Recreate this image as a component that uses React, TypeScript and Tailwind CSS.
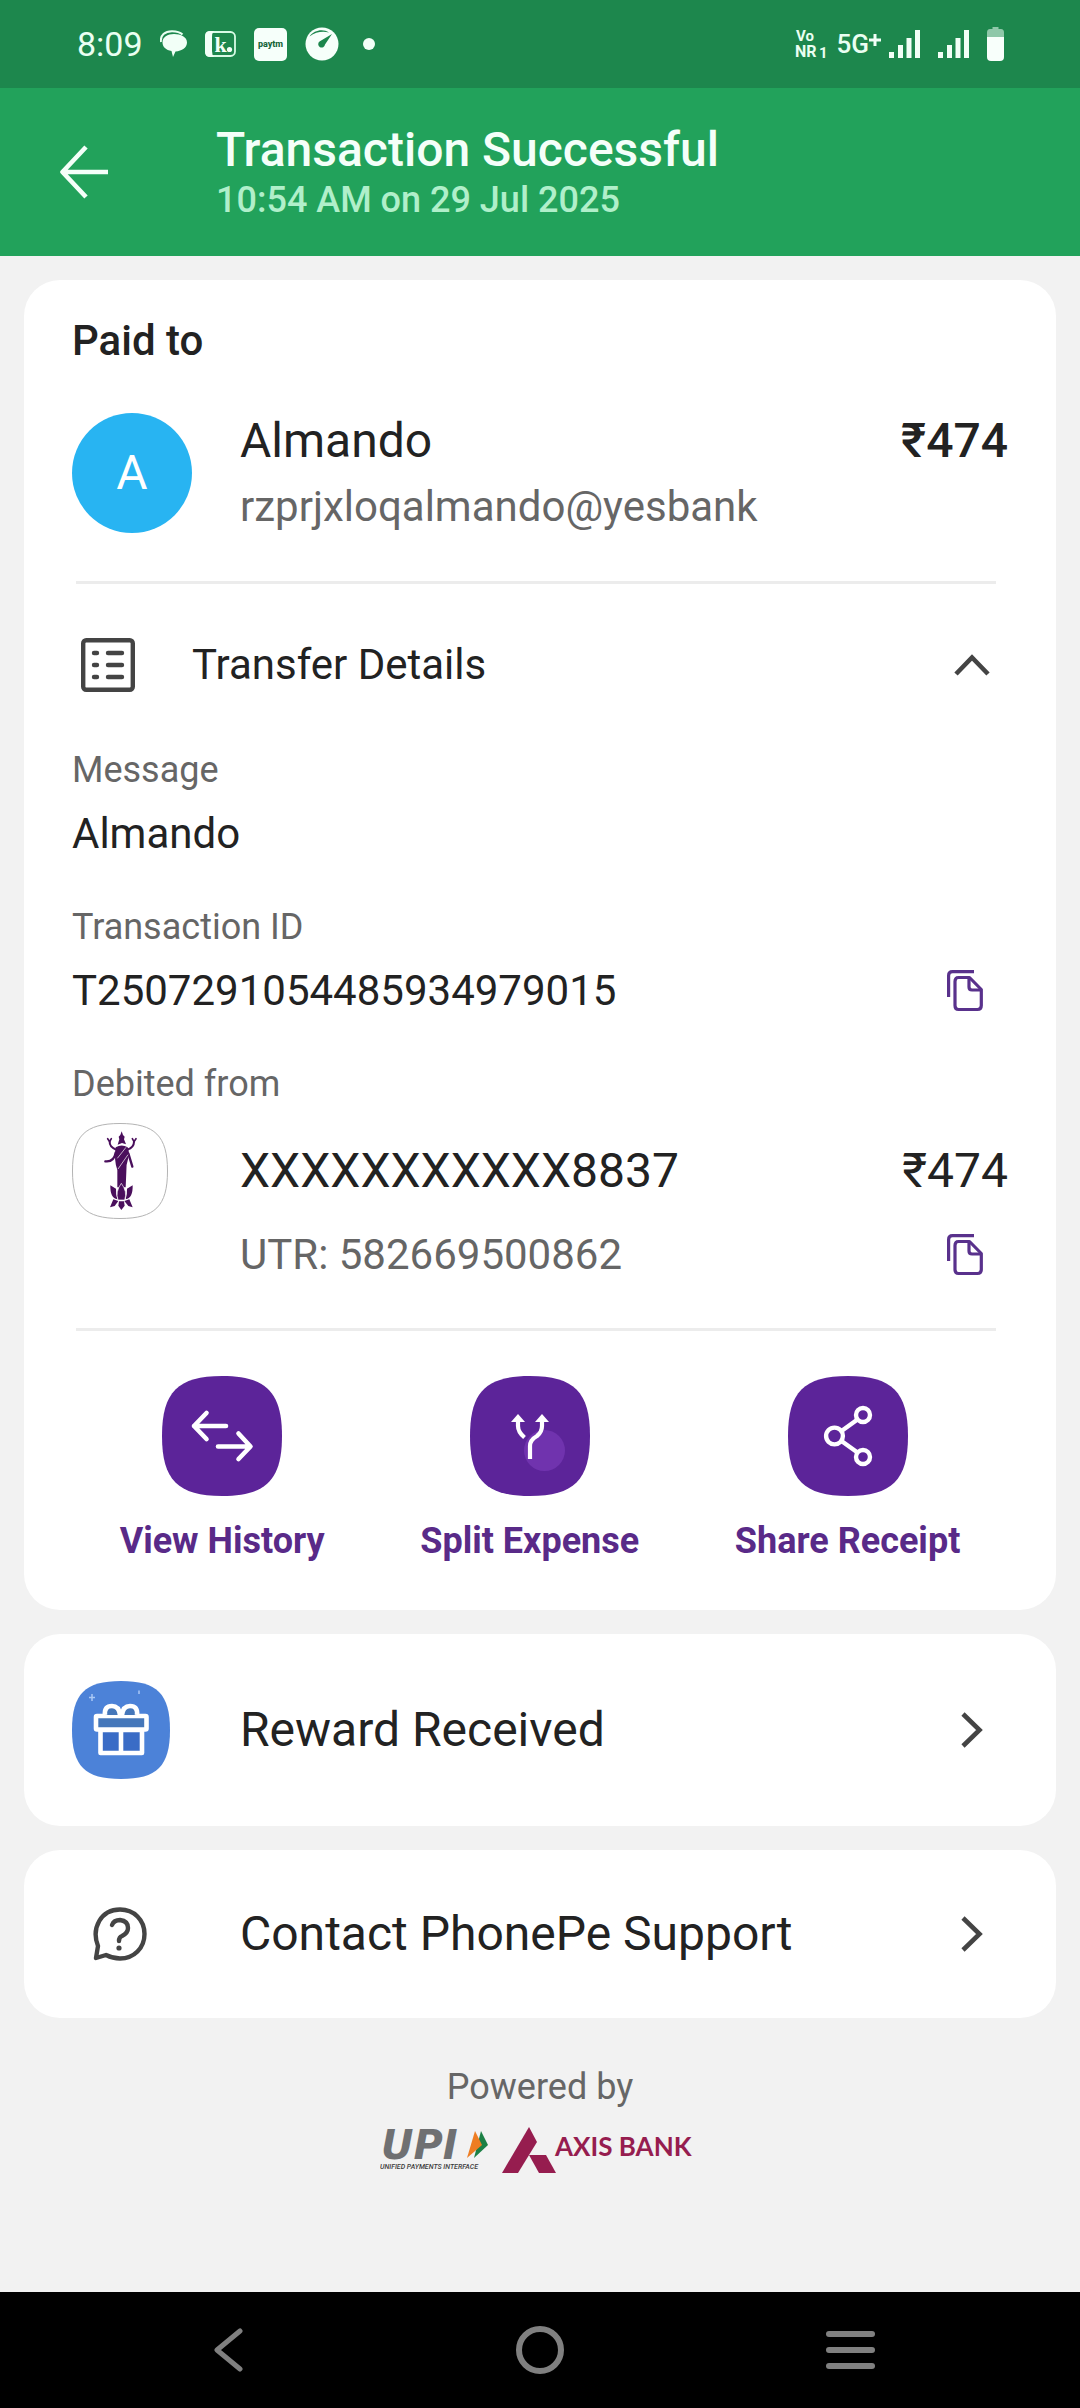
import type { ReactNode } from "react";

const SQUIRCLE = "M60 0C104 0 120 16 120 60S104 120 60 120 0 104 0 60 16 0 60 0Z";

function ChatIcon() {
  return (
    <svg width="27" height="28" viewBox="0 0 27 28" aria-hidden="true">
      <path d="M1 12C0 5 5 1.200 12 1.200C17 1.200 20 2 22.500 4.500" fill="none" stroke="#eafff2" strokeWidth="2" />
      <path d="M14 4C21 4 27 7 27 12.500C27 17.500 22 21 15.500 21.500L13 27L11.500 21C6 20 2.500 17 2.500 12.500C2.500 7 7.500 4 14 4Z" fill="#f2fff7" />
    </svg>
  );
}

function KIcon() {
  return (
    <svg width="31" height="26" viewBox="0 0 31 26" aria-hidden="true">
      <rect x="1" y="1" width="29" height="24" rx="4.500" fill="none" stroke="#d8fbe6" strokeWidth="1.800" />
      <path d="M5 0H9Q7 2 7 6V20Q7 24 9 26H5Q0 26 0 21V5Q0 0 5 0Z" fill="#f2fff7" />
      <text x="9.500" y="21" fontSize="22" fontWeight="700" fontFamily="Liberation Serif, serif" fill="#f2fff7">k</text>
      <circle cx="24.500" cy="18.500" r="2.600" fill="#f2fff7" />
    </svg>
  );
}

function PaytmIcon() {
  return (
    <svg width="33" height="33" viewBox="0 0 33 33" aria-hidden="true">
      <rect width="33" height="33" rx="5" fill="#f6fffa" />
      <text x="16.500" y="19" textAnchor="middle" fontSize="9" fontWeight="800" fontFamily="Roboto, sans-serif" fill="#17653a">paytm</text>
    </svg>
  );
}

function GaugeIcon() {
  return (
    <svg width="34" height="34" viewBox="0 0 34 34" aria-hidden="true">
      <circle cx="17" cy="17" r="16.500" fill="#f6fffa" />
      <path d="M4.500 9.500C9 3 18 1.500 24 5.500C17 4 11 5 4.500 9.500Z" fill="#1c864c" />
      <path d="M27 7L20 17.500A3.400 3.400 0 1 1 14.500 14.500Z" fill="#1c864c" />
    </svg>
  );
}

function SignalIcon() {
  return (
    <svg width="32" height="28" viewBox="0 0 32 28" fill="#f2fff7" aria-hidden="true">
      <rect x="0" y="22" width="5" height="6" />
      <rect x="9" y="15" width="5" height="13" />
      <rect x="17.500" y="8" width="5" height="20" />
      <rect x="26" y="0" width="5" height="28" />
    </svg>
  );
}

function BatteryIcon() {
  return (
    <svg width="17" height="34" viewBox="0 0 17 34" aria-hidden="true">
      <path d="M5.500 0H11.500V2H14Q17 2 17 5.500V10H0V5.500Q0 2 3 2H5.500Z" fill="#8fc8a9" />
      <path d="M0 10H17V30Q17 34 13 34H4Q0 34 0 30Z" fill="#f8fffb" />
    </svg>
  );
}

function StatusBar() {
  return (
    <div className="flex h-[88px] items-center justify-between bg-[#1d874d] pl-[77px] pr-[76px] text-[#eafff2]">
      <div className="flex items-center">
        <span className="w-[83px] text-[34px] leading-[40px]">8:09</span>
        <div className="flex items-center gap-[18px]">
          <ChatIcon />
          <KIcon />
          <PaytmIcon />
          <GaugeIcon />
        </div>
        <span className="ml-6 size-3 rounded-full bg-[#f2fff7]" />
      </div>
      <div className="flex items-center">
        <svg width="36" height="36" viewBox="0 0 36 36" fill="#eafff2" fontFamily="Roboto, sans-serif" fontWeight="700" aria-hidden="true">
          <text x="1" y="15" fontSize="15">Vo</text>
          <text x="0" y="31" fontSize="16">NR</text>
          <text x="24" y="32" fontSize="15">1</text>
        </svg>
        <span className="ml-[6px] text-[26px] font-medium leading-8">5G</span>
        <svg className="mb-2" width="12" height="14" viewBox="0 0 12 14" stroke="#f2fff7" strokeWidth="3" aria-hidden="true">
          <path d="M0 7H12M6 1V13" />
        </svg>
        <div className="ml-2 flex items-center gap-[17px]">
          <SignalIcon />
          <SignalIcon />
          <BatteryIcon />
        </div>
      </div>
    </div>
  );
}

function Header() {
  return (
    <header className="flex h-[168px] items-center bg-[#22a25b] pl-[60px]">
      <button type="button" aria-label="Back" className="w-[156px] shrink-0">
        <svg width="49" height="54" viewBox="0 0 49 54" fill="none" stroke="#f4fff9" strokeWidth="4.600" strokeLinejoin="round">
          <path d="M26 2L2.500 27L26 52M3 27H48" />
        </svg>
      </button>
      <div className="min-w-0">
        <h1 className="text-[48px] font-medium leading-[56px] text-[#f4fff9]">Transaction Successful</h1>
        <p className="text-[36px] font-medium leading-[44px] text-[#b0efca]">10:54 AM on 29 Jul 2025</p>
      </div>
    </header>
  );
}

function Divider() {
  return <hr className="ml-1 mr-3 h-[3px] border-0 bg-[#ececec]" />;
}

function CopyButton({ label }: { label: string }) {
  return (
    <button type="button" aria-label={label} className="mr-[25px] shrink-0">
      <svg width="36" height="42" viewBox="0 0 36 42" fill="none" stroke="#59318c" strokeWidth="3.200">
        <path d="M1.600 27V5.500Q1.600 1.600 5.500 1.600H27" />
        <path d="M11.500 7.500H22.500L34.300 19.500V35.500Q34.300 39.500 30.500 39.500H11.500Q8 39.500 8 35.500V11.500Q8 7.500 11.500 7.500Z" strokeLinejoin="round" />
        <path d="M22 8V17Q22 20 25 20H34" />
      </svg>
    </button>
  );
}

function ListIcon() {
  return (
    <svg width="54" height="54" viewBox="0 0 54 54" fill="none" stroke="#444" strokeWidth="4.400" aria-hidden="true">
      <rect x="2.200" y="2.200" width="49.600" height="49.600" rx="3" />
      <path d="M13 15H16M13 27H16M13 39H16M27 15H41M27 27H41M27 39H41" strokeLinecap="round" />
    </svg>
  );
}

function BankLogo() {
  return (
    <svg width="96" height="96" viewBox="36 39 288 288" fill="#4a0f5c" aria-hidden="true">
      <path
        d="M180 40.500C285 40.500 322.500 78 322.500 183S285 325.500 180 325.500 37.500 288 37.500 183 75 40.500 180 40.500Z"
        fill="#fff"
        stroke="#b4b4b4"
        strokeWidth="3"
      />
      <path d="M185 64L189 75L194 80L192 88L198 103L186 99L173 104L178 88L176 80L181 75Z" />
      <path d="M167 112Q185 101 203 112Q210 128 204 148Q198 164 199 185L197 232H172L172 180Q161 150 167 112Z" />
      <g fill="none" stroke="#4a0f5c" strokeLinecap="round">
        <path d="M168 119Q148 110 149 95" strokeWidth="6" />
        <path d="M202 119Q222 112 222 95" strokeWidth="6" />
        <path d="M143 86L149 95L154 86M217 86L222 95L228 86" strokeWidth="5" />
        <path d="M167 128Q162 157 136 154" strokeWidth="7" />
        <path d="M205 130Q211 150 217 170" strokeWidth="7" />
      </g>
      <path d="M172 145L198 112M174 177L204 134" stroke="#fff" strokeWidth="2" fill="none" />
      <path d="M151 226L168 236Q167 250 172 268Q150 265 151 226ZM218 226L201 236Q202 250 197 268Q219 265 218 226Z" />
      <path d="M184 220Q203 245 194 270H174Q165 245 184 220Z" stroke="#fff" strokeWidth="2" />
      <path d="M160 268L175 273L164 288L150 292ZM208 268L193 273L205 288L218 292ZM177 274H192L194 287L184 300L175 287Z" />
    </svg>
  );
}

function HistoryGlyph() {
  return (
    <g fill="none" stroke="#fff" strokeWidth="4.600" strokeLinejoin="round" strokeLinecap="round">
      <path d="M44.500 37L32 50L44.500 63M32 50H64" />
      <path d="M76.500 57.500L88.500 70.500L76.500 83M88 70.500H56" />
    </g>
  );
}

function SplitGlyph() {
  return (
    <g>
      <circle cx="74.500" cy="74.500" r="20.500" fill="#7033ae" />
      <g fill="none" stroke="#fff" strokeWidth="4.200">
        <path d="M48 44V50Q48 56 54.500 61.500" />
        <path d="M72 44V50Q72 56 67 60Q60 64 60 70V83" />
      </g>
      <path d="M48 38L55 46H41ZM72 38L79 46H65Z" fill="#fff" />
    </g>
  );
}

function ShareGlyph() {
  return (
    <g fill="none" stroke="#fff" strokeWidth="4.400">
      <circle cx="46.500" cy="60" r="8.400" />
      <circle cx="75" cy="39" r="7" />
      <circle cx="75" cy="81" r="7" />
      <path d="M53.500 55L69.500 43.500M53.500 65L69.500 76.500" />
    </g>
  );
}

function Action({ label, children }: { label: string; children: ReactNode }) {
  return (
    <button type="button" className="flex flex-col items-center gap-[23px]">
      <svg width="120" height="120" viewBox="0 0 120 120" aria-hidden="true">
        <path d={SQUIRCLE} fill="#5c2499" />
        {children}
      </svg>
      <span className="text-[36px] font-bold leading-[44px] text-[#592a88]">{label}</span>
    </button>
  );
}

function ChevronRight() {
  return (
    <svg className="mr-[25px] shrink-0" width="22" height="36" viewBox="0 0 22 36" fill="none" stroke="#444" strokeWidth="4.600" aria-hidden="true">
      <path d="M2 2L18.500 18L2 34" />
    </svg>
  );
}

function GiftIcon() {
  return (
    <svg width="98" height="98" viewBox="0 0 98 98" aria-hidden="true">
      <path d="M49 0C85 0 98 13 98 49S85 98 49 98 0 85 0 49 13 0 49 0Z" fill="#4c82d8" />
      <g fill="#3a6cc6" stroke="#fff" strokeWidth="4.600" strokeLinejoin="round">
        <path d="M28.500 49H70V72H28.500ZM49 49V72" />
        <rect x="24" y="35" width="50.500" height="13.500" rx="1" fill="#4577ba" />
        <path d="M33 34Q32 25 40 25Q47 25 48 34M50 34Q51 25 58 25Q66 25 65 34" fill="#4577ba" />
      </g>
      <path d="M20 13V20M17 16.500H23M67 9.500V13" stroke="#a9c8f5" strokeWidth="1.500" />
    </svg>
  );
}

function HelpIcon() {
  return (
    <svg width="54" height="54" viewBox="0 0 54 54" fill="none" stroke="#444" strokeWidth="4.400" strokeLinecap="round" strokeLinejoin="round" aria-hidden="true">
      <path d="M3 51L5 39C-2 21 8 2.500 27 2.500C41 2.500 51.500 13 51.500 27C51.500 41 41 51.500 27 51.500C21 51.500 17 50 13 48Z" />
      <path d="M19 18Q21 13 27 13Q35 14 35 21Q35 26 29 29Q26 30 26 34" />
      <circle cx="26" cy="41" r="2.600" fill="#444" stroke="none" />
    </svg>
  );
}

function LinkCard({ icon, label, className }: { icon: ReactNode; label: string; className: string }) {
  return (
    <button type="button" className={`flex w-full items-center rounded-[36px] bg-white px-12 text-left ${className}`}>
      <span className="w-[168px] shrink-0">{icon}</span>
      <span className="flex-1 text-[48px] leading-[56px]">{label}</span>
      <ChevronRight />
    </button>
  );
}

function UpiLogo() {
  return (
    <svg width="110" height="46" viewBox="0 0 110 46" role="img" aria-label="UPI">
      <text x="1" y="32" fontSize="40" fontWeight="700" fontStyle="italic" fontFamily="DejaVu Sans, sans-serif" fill="#6f7072">UPI</text>
      <path d="M101 4L108 18L94 31Z" fill="#1c8045" />
      <path d="M95 4L102 18L87 31Z" fill="#ee7d23" />
      <text x="0" y="42" fontSize="7" fontStyle="italic" fontWeight="500" fontFamily="Roboto, sans-serif" fill="#3c3c3c">UNIFIED PAYMENTS INTERFACE</text>
    </svg>
  );
}

function AxisLogo() {
  return (
    <svg width="198" height="46" viewBox="0 0 198 46" role="img" aria-label="Axis Bank" fill="#961d4f">
      <path d="M27 0L35 15L16 46H0Z" />
      <path d="M27 28H44L54 46H37Z" />
      <text x="53" y="29" fontSize="26" fontWeight="700" fontFamily="Lato, sans-serif">AXIS BANK</text>
    </svg>
  );
}

function SystemNav() {
  return (
    <nav className="mt-auto grid h-[116px] grid-cols-[1fr_48px_1fr] items-center bg-black px-[205px]" aria-label="System">
      <button type="button" aria-label="Back" className="justify-self-start pl-2">
        <svg width="30" height="44" viewBox="0 0 30 44" fill="none" stroke="#808080" strokeWidth="5" strokeLinecap="round" strokeLinejoin="round">
          <path d="M27 3L4 22L27 41" />
        </svg>
      </button>
      <button type="button" aria-label="Home" className="size-12 rounded-full border-[6px] border-[#808080]" />
      <button type="button" aria-label="Recent apps" className="flex w-[49px] flex-col gap-[10px] justify-self-end">
        <span className="h-[6px] w-full rounded-sm bg-[#808080]" />
        <span className="h-[6px] w-full rounded-sm bg-[#808080]" />
        <span className="h-[6px] w-full rounded-sm bg-[#808080]" />
      </button>
    </nav>
  );
}

export default function App() {
  return (
    <div className="flex min-h-screen flex-col bg-[#f2f2f2] font-[Roboto,sans-serif] text-[#222]">
      <StatusBar />
      <Header />
      <main className="flex flex-col gap-6 px-6 pt-6">
        <section className="rounded-[36px] bg-white pb-[47px] pt-[37px]">
          <div className="px-12">
            <h2 className="text-[42px] font-medium leading-[48px]">Paid to</h2>
            <div className="mb-12 mt-12 flex items-start">
              <div className="w-[168px] shrink-0">
                <div className="flex size-[120px] items-center justify-center rounded-full bg-[#28b4f2] text-[48px] leading-[56px] text-white">A</div>
              </div>
              <div className="min-w-0 flex-1">
                <p className="text-[48px] leading-[56px]">Almando</p>
                <p className="mt-3 text-[42px] leading-[52px] text-[#666]">rzprjxloqalmando@yesbank</p>
              </div>
              <p className="text-[48px] font-medium leading-[56px]">₹474</p>
            </div>
            <Divider />
            <button type="button" aria-expanded="true" className="mt-[54px] flex w-full items-center pl-[9px] text-left">
              <span className="w-[111px] shrink-0">
                <ListIcon />
              </span>
              <span className="flex-1 text-[42px] leading-[52px]">Transfer Details</span>
              <svg className="mr-[18px]" width="36" height="22" viewBox="0 0 36 22" fill="none" stroke="#444" strokeWidth="4.600" aria-hidden="true">
                <path d="M2 20L18 3.500L34 20" />
              </svg>
            </button>
            <dl className="mt-14 flex flex-col gap-[45px]">
              <div>
                <dt className="text-[36px] leading-[44px] text-[#666]">Message</dt>
                <dd className="mt-4 text-[42px] leading-[52px]">Almando</dd>
              </div>
              <div>
                <dt className="text-[36px] leading-[44px] text-[#666]">Transaction ID</dt>
                <dd className="mt-4 flex items-center justify-between text-[42px] leading-[52px]">
                  T2507291054485934979015
                  <CopyButton label="Copy transaction ID" />
                </dd>
              </div>
              <div>
                <dt className="text-[36px] leading-[44px] text-[#666]">Debited from</dt>
                <dd className="mt-[17px] flex items-center">
                  <span className="w-[168px] shrink-0">
                    <BankLogo />
                  </span>
                  <span className="flex-1 text-[48px] leading-[56px]">XXXXXXXXXXX8837</span>
                  <span className="text-[48px] leading-[56px]">₹474</span>
                </dd>
                <dd className="mt-[10px] flex items-center justify-between pl-[168px] text-[42px] leading-[52px] text-[#666]">
                  UTR: 582669500862
                  <CopyButton label="Copy UTR" />
                </dd>
              </div>
            </dl>
            <div className="mt-[47px]">
              <Divider />
            </div>
          </div>
          <div className="mt-[45px] flex justify-evenly">
            <Action label="View History">
              <HistoryGlyph />
            </Action>
            <Action label="Split Expense">
              <SplitGlyph />
            </Action>
            <Action label="Share Receipt">
              <ShareGlyph />
            </Action>
          </div>
        </section>
        <LinkCard icon={<GiftIcon />} label="Reward Received" className="py-[47px]" />
        <LinkCard icon={<span className="block pl-[21px]"><HelpIcon /></span>} label="Contact PhonePe Support" className="py-14" />
      </main>
      <footer className="mt-[47px] flex flex-col items-center gap-[18px] pb-12">
        <p className="text-[36px] leading-[44px] text-[#666]">Powered by</p>
        <div className="flex items-center gap-3">
          <UpiLogo />
          <AxisLogo />
        </div>
      </footer>
      <SystemNav />
    </div>
  );
}
